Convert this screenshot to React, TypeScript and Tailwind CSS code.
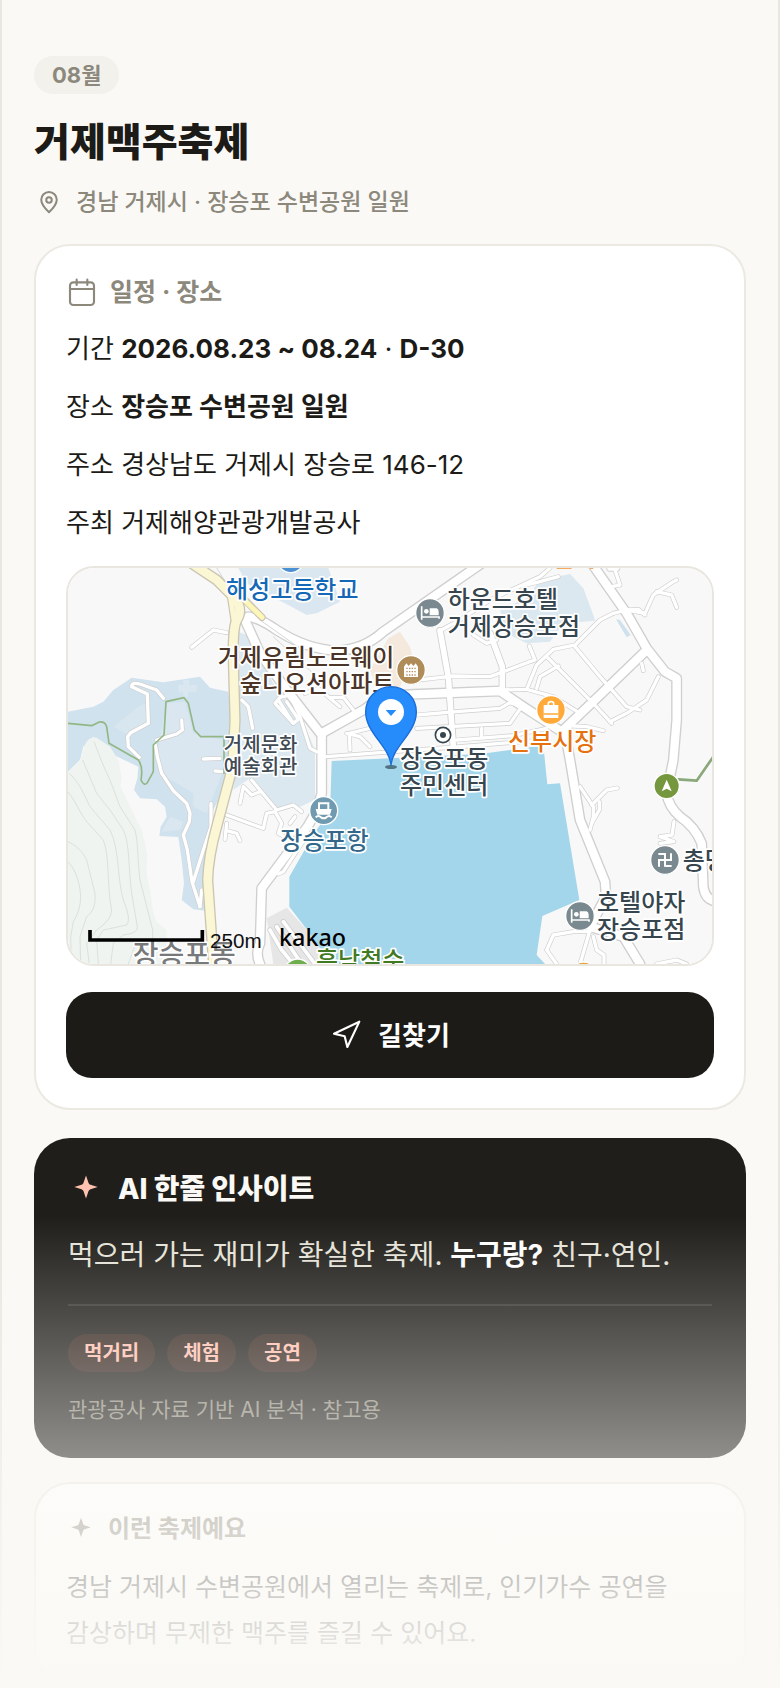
import type { ReactNode } from 'react';

interface Label {
  text: string;
  x: number;
  y: number;
  color: string;
  size?: number;
  anchor?: 'start' | 'middle' | 'end';
}

// ── Map data ─────────────────────────────────────────────────────────────────
const MINOR_ROADS = [
  'M395 262L460 210L500 218',
  'M310 415L290 390L240 372Q215 366 215 380L262 402L265 490L212 518L203 530L205 560L238 592',
  'M365 480L367 510L350 522L290 540',
  'M286 555L292 590L305 640L340 692L380 730L390 760L388 785L370 825L382 870L396 965L420 1040',
  'M453 730L453 800L430 870L400 965',
  'M425 990L420 1040',
  'M430 597L480 595M465 633L490 635',
  'M545 420L565 440L578 505',
  'M700 490L645 430L660 412L690 405L720 470L750 565L770 575',
  'M655 420L700 490L715 478L680 425',
  'M812 412L850 412L880 450',
  'M735 400L775 385L840 440',
  'M800 590L1000 575L1200 560L1450 540',
  'M870 570L868 520L950 500',
  'M930 560L900 530L860 520',
  'M1060 362L1180 348L1290 350L1410 305L1425 300L1408 258',
  'M1140 212L1200 180L1290 120L1440 50L1470 24',
  'M1385 78L1420 70L1495 50',
  'M1240 225L1280 250L1310 240',
  'M1070 465L1190 455L1320 445L1350 428L1410 450',
  'M1070 505L1350 490L1378 450',
  'M1190 540L1360 527L1460 505',
  'M1265 505L1265 530',
  'M1320 390L1400 388L1430 315L1480 268L1545 255L1620 180L1660 160L1700 150L1755 160L1780 105L1840 65L1850 60',
  'M1400 388L1480 410L1560 460',
  'M1545 260L1620 350L1700 440L1740 450',
  'M1460 290L1600 430L1655 490',
  'M1430 385L1440 350L1495 318',
  'M1650 485L1700 460L1760 420L1795 350',
  'M1745 310L1750 332',
  'M1700 150L1735 148L1755 165',
  'M1790 95L1835 105L1850 142',
  'M1665 30L1680 75L1655 80',
  'M1540 498L1580 500L1630 512',
  'M1560 680L1600 740L1600 770L1590 810',
  'M1595 735L1640 690L1672 684',
  'M1618 725L1618 750L1595 790',
  'M1842 785L1836 825L1800 830L1842 845L1800 850',
  'M1590 1115L1540 1115L1480 1125L1460 1170L1490 1212',
  'M1590 1110L1560 1212',
  'M1600 1130L1610 1170L1632 1185L1632 1212',
  'M1790 1212L1850 1200L1880 1212',
  'M500 765L610 805L620 760L645 755L665 790L655 820L690 840',
  'M575 660L650 750L700 735L725 755',
  'M540 730L550 680L575 705L600 695',
  'M500 790L495 838',
  'M500 812L530 820L540 842',
  'M655 942L670 935L745 820',
  'M690 790L705 770',
];

const MID_ROADS = [
  'M1140 212L1165 350L1180 560',
  'M1290 220L1327 320L1327 390',
  'M1670 24L1650 24',
];

const MAIN_ROADS = [
  'M565 170Q600 175 650 210Q740 268 830 272Q910 270 970 215L1200 55L1265 10',
  'M555 180L600 280L680 390L785 525L785 700Q770 770 720 830L605 985L600 1150Q585 1180 600 1212',
  'M785 520L915 447Q960 405 1060 403L1320 393L1390 440L1505 515',
  'M1510 510L1620 405L1760 270',
  'M1515 520L1530 600L1560 780L1635 965L1638 1010L1590 1100L1690 1130L1740 1212',
  'M1595 10L1700 160L1760 265L1815 335L1850 355V400V480L1840 600L1820 700Q1825 740 1860 770Q1905 800 1925 850L1930 980Q1935 1020 1970 1025',
];

const CONTOURS = [
  'M102 545C120 590 130 620 150 660L180 740L225 810C235 850 232 900 240 960L278 1110V1140L225 1155L205 1212',
  'M68 600L110 700L150 750L190 810C210 850 205 930 215 1000L232 1100Q235 1120 190 1125L160 1150L152 1212',
  'M28 640C60 670 70 700 90 740L150 810C180 870 170 950 190 1020Q215 1080 200 1095L130 1110L110 1140L115 1212',
  'M24 695C45 720 60 760 80 785L130 840C150 890 140 980 155 1050Q155 1080 110 1110L80 1150L88 1212',
  'M24 845C45 855 65 870 80 900L105 1000Q110 1050 80 1070L60 1130L62 1212',
  'M24 905C40 920 60 960 62 1010Q62 1050 40 1085L32 1130L34 1212',
];

const LABELS: Label[] = [
  { text: '해성고등학교', x: 498, y: 113, color: '#1568b5' },
  { text: '하운드호텔', x: 1163, y: 145, color: '#37464e' },
  { text: '거제장승포점', x: 1163, y: 226, color: '#37464e' },
  { text: '거제유림노르웨이', x: 1003, y: 318, color: '#4b3428', anchor: 'end' },
  { text: '숲디오션아파트', x: 1003, y: 397, color: '#4b3428', anchor: 'end' },
  { text: '거제문화', x: 602, y: 576, color: '#3f4b54', size: 60, anchor: 'middle' },
  { text: '예술회관', x: 602, y: 643, color: '#3f4b54', size: 60, anchor: 'middle' },
  { text: '장승포동', x: 1020, y: 620, color: '#37464e' },
  { text: '주민센터', x: 1020, y: 703, color: '#37464e' },
  { text: '신부시장', x: 1344, y: 569, color: '#e5720f' },
  { text: '장승포항', x: 661, y: 868, color: '#34688a' },
  { text: '총명사', x: 1868, y: 926, color: '#37464e' },
  { text: '호텔야자', x: 1611, y: 1053, color: '#37464e' },
  { text: '장승포점', x: 1611, y: 1134, color: '#37464e' },
  { text: '장승포동', x: 218, y: 1216, color: '#77797b', size: 84 },
  { text: '흥남철수', x: 768, y: 1227, color: '#417a22' },
];

function Bed({ x, y }: { x: number; y: number }) {
  return (
    <g transform={`translate(${x} ${y})`}>
      <circle r="43" fill="#7a888f" stroke="#fff" strokeWidth="4" />
      <path d="M-25 -20V20M-25 12H27V17" fill="none" stroke="#fff" strokeWidth="5" />
      <circle cx="-11" cy="-5" r="7" fill="#fff" />
      <path d="M-1 -14H20Q26 -12 26 -4V7H-1Z" fill="#fff" />
    </g>
  );
}

function FestivalMap() {
  return (
    <svg
      className="block h-full w-full"
      viewBox="24 24 1932 1188"
      preserveAspectRatio="xMidYMid slice"
      role="img"
      aria-label="장승포 수변공원 지도"
    >
      <rect x="24" y="24" width="1932" height="1188" fill="#f8f8f8" />

      {/* land cover */}
      <path d="M24 455L100 440L130 425L160 390L215 353L310 367L420 350L450 383L505 395L520 560L500 670L455 760L440 900L430 950L436 1052L400 1048L365 1020L372 970L365 900L355 831L298 828L302 800L320 770L315 740L290 718L240 715L222 690L232 655L235 620L150 580L140 560L100 530L70 560L60 600L24 635Z" fill="#d0e2ee" />
      <path d="M24 635L60 600L75 555Q85 530 110 533L150 560L175 600L185 650L182 680L215 750L245 810L262 880L260 940L272 1000L280 1060L290 1085L320 1110L320 1212H24Z" fill="#eff4f1" />
      <g fill="none" stroke="#d0d7cf" strokeWidth="2">
        {CONTOURS.map(d => <path key={d} d={d} />)}
      </g>
      <path d="M320 430L375 425L400 520L490 540L490 630L440 760L400 740L400 700L300 640L295 560Z" fill="#dae7f0" />
      <path d="M370 360H388V375H410V395H385V410H370V395H355V375H370Z" fill="#dae7f0" />
      <path d="M235 440L255 430L262 480L205 525L160 500Z" fill="#d8e6ef" />
      <path d="M330 770L370 785L360 810L305 815Z" fill="#dae7f0" />
      <path d="M535 215L560 225L640 370L740 510L765 570V720L720 740L650 745L570 655L520 690L540 540Z" fill="#dbe8f0" />
      <path d="M535 24H805L840 125L770 160L740 165L690 138L560 70Z" fill="#dae7f0" />
      <path d="M1440 60L1530 42L1570 85L1600 165L1605 182L1510 190L1470 245L1400 250L1340 220L1320 150L1400 115Z" fill="#dbe8f0" />
      <path d="M1668 178L1680 180L1712 225L1700 232Z" fill="#cfe1ec" />
      <path d="M930 330L985 235L1020 215L1050 260L1060 300L1010 400L950 380Z" fill="#f4e9dc" />
      <path d="M620 1075L680 1043L740 1110L815 1212H640Z" fill="#e6e6e6" />

      {/* sea */}
      <path d="M815 603L960 596L1260 582L1450 556L1462 673L1500 670L1558 1020L1447 1068L1430 1185L1455 1212H815L740 1108L688 1040V950L765 815Q812 760 812 700Z" fill="#a3d6eb" />

      {/* roads */}
      <g fill="none" strokeLinecap="round" strokeLinejoin="round">
        <g stroke="#cfcfcf">
          {MINOR_ROADS.map(d => <path key={d} d={d} strokeWidth="14" />)}
          {MID_ROADS.map(d => <path key={d} d={d} strokeWidth="22" />)}
          {MAIN_ROADS.map(d => <path key={d} d={d} strokeWidth="33" />)}
          <path d="M650 1100L725 1212M670 1085L765 1212M630 1110L665 1170L700 1212" strokeWidth="16" />
        </g>
        <g stroke="#fff">
          {MINOR_ROADS.map(d => <path key={d} d={d} strokeWidth="10" />)}
          {MID_ROADS.map(d => <path key={d} d={d} strokeWidth="17" />)}
          {MAIN_ROADS.map(d => <path key={d} d={d} strokeWidth="25" />)}
          <path d="M650 1100L725 1212M670 1085L765 1212M630 1110L665 1170L700 1212" strokeWidth="11" />
        </g>
        <path d="M470 24L505 80M600 180L720 265M640 230L770 350" stroke="#d6d6d6" strokeWidth="3" />
        <path d="M24 490L95 497L118 486Q135 484 140 500L147 550L235 600Q250 620 243 660Q252 680 262 668L280 635V555L312 525L318 425L372 413L385 430L403 510L422 530H492V640" stroke="#92b784" strokeWidth="5" />
        <path d="M1855 658L1910 662L1960 590" stroke="#8aa97a" strokeWidth="8" />
        <g stroke="#cbc5b3">
          <path d="M555 120L606 172M510 100L522 180" strokeWidth="22" />
          <path d="M380 0L470 60L525 115Q550 150 530 180Q518 205 520 300L525 480L518 620L470 800Q445 890 443 960L450 1060L462 1230" strokeWidth="34" />
        </g>
        <g stroke="#fbf6d3">
          <path d="M510 100L522 180" strokeWidth="15" />
          <path d="M380 0L470 60L525 115Q550 150 530 180Q518 205 520 300L525 480L518 620L470 800Q445 890 443 960L450 1060L462 1230" strokeWidth="26" />
        </g>
        <path d="M545 112L606 172" stroke="#fdf6b8" strokeWidth="15" />
      </g>

      {/* place names */}
      <g
        fontFamily="'Noto Sans CJK KR', sans-serif"
        fontWeight="500"
        stroke="#fff"
        strokeWidth="10"
        strokeLinejoin="round"
        paintOrder="stroke"
      >
        {LABELS.map(l => (
          <text key={`${l.text}-${l.y}`} x={l.x} y={l.y} fill={l.color} fontSize={l.size ?? 72} textAnchor={l.anchor ?? 'start'}>
            {l.text}
          </text>
        ))}
      </g>

      {/* place markers */}
      <circle cx="692" cy="-2" r="40" fill="#4a90d2" stroke="#fff" strokeWidth="4" />
      <path d="M1490 24H1535M1590 24H1600" stroke="#f5a95c" strokeWidth="6" />
      <Bed x={1110} y={159} />
      <Bed x={1560} y={1068} />

      <g transform="translate(1053 330)">
        <circle r="43" fill="#b08c59" stroke="#fff" strokeWidth="4" />
        <path d="M-21 21V-10L-14 -20L-7 -12L0 -20L7 -12L14 -20L21 -10V21Z" fill="#fff" />
        <path d="M-14 -5H15M-14 5H15M-14 15H15" stroke="#b08c59" strokeWidth="4" strokeDasharray="4 4" />
      </g>

      <g transform="translate(1473 450)">
        <circle r="43" fill="#ffa938" stroke="#fff" strokeWidth="4" />
        <path d="M-22 -15H22V24H-22Z" fill="#fff" />
        <path d="M-8 -13V-20Q-8 -25 0 -25Q8 -25 8 -20V-13" fill="none" stroke="#fff" strokeWidth="5" />
        <path d="M-22 12H22" stroke="#ffa938" strokeWidth="4" />
      </g>

      <g transform="translate(791 752)">
        <circle r="42" fill="#6f9ab0" stroke="#fff" strokeWidth="4" />
        <path d="M-14 -4V-22H14V-4" fill="none" stroke="#fff" strokeWidth="6" />
        <path d="M-24 -5H24L19 12H-19Z" fill="#fff" />
        <path d="M-24 20Q-16 12 -8 20Q0 26 8 20Q16 12 24 20" fill="none" stroke="#fff" strokeWidth="6" />
      </g>

      <g transform="translate(1149 525)">
        <circle r="26" fill="#fff" />
        <circle r="23" fill="#fff" stroke="#37464e" strokeWidth="5" />
        <circle r="9" fill="#37464e" />
      </g>

      <g transform="translate(1820 678)">
        <circle r="38" fill="#75983f" stroke="#fff" strokeWidth="4" />
        <path d="M0 -19L15 16L0 8L-15 16Z" fill="#fff" />
      </g>

      <g transform="translate(1815 900)">
        <circle r="43" fill="#7a888f" stroke="#fff" strokeWidth="4" />
        <path d="M18 -20V0H-18V20M0 20V-18H-20M20 18H0" fill="none" stroke="#fff" strokeWidth="6" />
      </g>

      <circle cx="713" cy="1238" r="41" fill="#6fae4f" stroke="#fff" strokeWidth="4" />
      <circle cx="1571" cy="1246" r="40" fill="#e8a23c" stroke="#fff" strokeWidth="4" />

      {/* festival pin */}
      <ellipse cx="993" cy="621" rx="18" ry="6" fill="#3d5a68" opacity="0.8" />
      <path
        d="M993 617C990 560 917 520 917 456A76 76 0 0 1 1069 456C1069 520 996 560 993 617Z"
        fill="#268bfb"
        stroke="#1a6cd6"
        strokeWidth="4"
      />
      <circle cx="993" cy="456" r="39" fill="#fff" />
      <path d="M977 450H1009L993 468Z" fill="#268bfb" />

      {/* scale and provider */}
      <path d="M90 1110V1140H427V1110" fill="none" stroke="#000" strokeWidth="11" />
      <text x="450" y="1163" fontFamily="'Liberation Sans', Arial, sans-serif" fontSize="62" fill="#111">250m</text>
      <text x="657" y="1157" fontFamily="'Noto Sans', sans-serif" fontSize="70" fontWeight="500" fill="#000">kakao</text>
    </svg>
  );
}

// ── Icons ────────────────────────────────────────────────────────────────────
function LineIcon({ className, children }: { className: string; children: ReactNode }) {
  return (
    <svg
      className={className}
      viewBox="0 0 24 24"
      fill="none"
      stroke="currentColor"
      strokeWidth="1.6"
      strokeLinecap="round"
      strokeLinejoin="round"
      aria-hidden="true"
    >
      {children}
    </svg>
  );
}

function Spark({ className }: { className: string }) {
  return (
    <svg className={className} viewBox="0 0 24 24" fill="currentColor" aria-hidden="true">
      <path d="M12 3L13.700 8Q14.100 9 15 9.200L19.800 10.600L15 12.100Q14.100 12.400 13.700 13.300L12 18.400L10.300 13.300Q9.900 12.400 9 12.100L4.200 10.600L9 9.200Q9.900 9 10.300 8Z" />
    </svg>
  );
}

const TAGS = ['먹거리', '체험', '공연'];

export default function App() {
  return (
    <div className="relative min-h-screen overflow-hidden bg-[#faf9f5] font-['Inter','Noto_Sans_CJK_KR',sans-serif] text-[#1c1b17]">
      <main className="flex min-h-screen flex-col border-x-2 border-[#e9e7e0] px-8 pt-14">
        <header>
          <span className="inline-flex h-[38px] items-center rounded-full bg-[#f2f1ec] px-[18px] align-top text-[22px] font-bold text-[#8c887c]">
            08월
          </span>
          <h1 className="mt-[22px] text-[39px] leading-[52px] font-extrabold">거제맥주축제</h1>
          <p className="mt-[18px] flex items-center gap-3 text-[23px] leading-8 font-medium text-[#8c887c]">
            <LineIcon className="size-[30px] shrink-0">
              <path d="M18.200 10.200c0 4.200-6.200 10-6.200 10s-6.200-5.800-6.200-10a6.200 6.200 0 0 1 12.400 0z" />
              <circle cx="12" cy="10.300" r="2.200" />
            </LineIcon>
            경남 거제시 · 장승포 수변공원 일원
          </p>
        </header>

        <section className="mt-[26px] rounded-[36px] border-2 border-[#ece9e2] bg-white p-[30px]">
          <h2 className="flex h-[34px] items-center gap-3 text-[25px] font-bold text-[#8c887c]">
            <LineIcon className="size-8 shrink-0">
              <rect x="3" y="4" width="18" height="17" rx="2.500" />
              <path d="M3 9h18M8 2v4M16 2v4" />
            </LineIcon>
            일정 · 장소
          </h2>
          <div className="mt-4 flex flex-col gap-3 text-[26px] leading-[46px]">
            <p>기간 <b>2026.08.23 ~ 08.24</b> · <b>D-30</b></p>
            <p>장소 <b>장승포 수변공원 일원</b></p>
            <p>주소 경상남도 거제시 장승로 146-12</p>
            <p>주최 거제해양관광개발공사</p>
          </div>
          <div className="mt-5 h-[400px] overflow-hidden rounded-[28px] border-2 border-[#e9e6df]">
            <FestivalMap />
          </div>
          <button
            type="button"
            className="mt-[26px] flex h-[86px] w-full items-center justify-center gap-4 rounded-[26px] bg-[#1c1b17] text-[26px] font-bold text-white"
          >
            <LineIcon className="size-8 shrink-0">
              <path d="M3 11L22 2L13 21L11 13Z" />
            </LineIcon>
            길찾기
          </button>
        </section>

        <section className="mt-7 rounded-[36px] bg-[#1f1e1a] px-[34px] py-8">
          <h2 className="flex h-[38px] items-center gap-[14px] text-[28px] font-extrabold text-[#faf9f5]">
            <Spark className="size-9 shrink-0 text-[#ffc2b0]" />
            AI 한줄 인사이트
          </h2>
          <p className="mt-[22px] text-[28px] leading-[50px] text-[#e5e2d8]">
            먹으러 가는 재미가 확실한 축제. <b className="text-white">누구랑?</b> 친구·연인.
          </p>
          <hr className="mt-6 border-t-2 border-white/10" />
          <ul className="mt-7 flex gap-3">
            {TAGS.map(tag => (
              <li key={tag} className="flex h-[38px] items-center rounded-full bg-[#ff6b4a]/10 px-4 text-xl font-bold text-[#ffbfae]">
                {tag}
              </li>
            ))}
          </ul>
          <p className="mt-[22px] text-[21px] leading-8 text-[#8c887c]">관광공사 자료 기반 AI 분석 · 참고용</p>
        </section>

        <section className="mt-6 rounded-[36px] border-2 border-[#ece9e2] bg-white p-[30px] pb-7">
          <h2 className="flex h-[30px] items-center gap-3 text-2xl font-bold text-[#8c887c]">
            <Spark className="size-[30px] shrink-0" />
            이런 축제예요
          </h2>
          <p className="mt-5 text-[25px] leading-[46px] break-keep">
            경남 거제시 수변공원에서 열리는 축제로, 인기가수 공연을 감상하며 무제한 맥주를 즐길 수 있어요.
          </p>
        </section>
      </main>

      <div className="pointer-events-none absolute inset-x-0 bottom-0 h-[472px] bg-linear-to-b from-[#faf9f5]/0 to-[#faf9f5]" />
    </div>
  );
}
